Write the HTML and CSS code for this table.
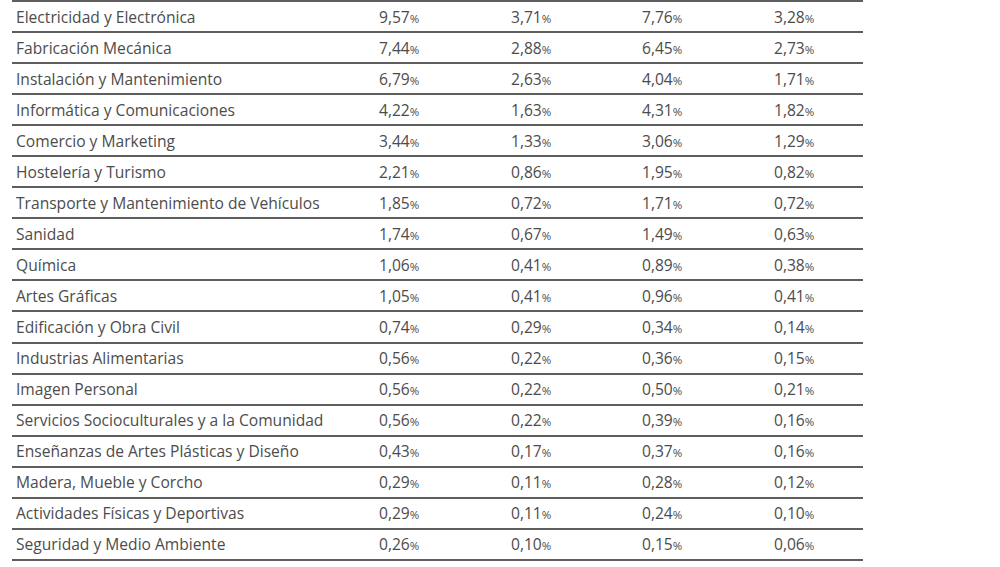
FILE: index.html
```html
<!DOCTYPE html>
<html lang="es">
<head>
<meta charset="utf-8">
<link rel="stylesheet" href="styles.css">
</head>
<body>
<div class="table">
  <div class="row"><div class="name">Electricidad y Electrónica</div><div class="num">9,57<span class="pc">%</span></div><div class="num">3,71<span class="pc">%</span></div><div class="num">7,76<span class="pc">%</span></div><div class="num">3,28<span class="pc">%</span></div></div>
  <div class="row"><div class="name">Fabricación Mecánica</div><div class="num">7,44<span class="pc">%</span></div><div class="num">2,88<span class="pc">%</span></div><div class="num">6,45<span class="pc">%</span></div><div class="num">2,73<span class="pc">%</span></div></div>
  <div class="row"><div class="name">Instalación y Mantenimiento</div><div class="num">6,79<span class="pc">%</span></div><div class="num">2,63<span class="pc">%</span></div><div class="num">4,04<span class="pc">%</span></div><div class="num">1,71<span class="pc">%</span></div></div>
  <div class="row"><div class="name">Informática y Comunicaciones</div><div class="num">4,22<span class="pc">%</span></div><div class="num">1,63<span class="pc">%</span></div><div class="num">4,31<span class="pc">%</span></div><div class="num">1,82<span class="pc">%</span></div></div>
  <div class="row"><div class="name">Comercio y Marketing</div><div class="num">3,44<span class="pc">%</span></div><div class="num">1,33<span class="pc">%</span></div><div class="num">3,06<span class="pc">%</span></div><div class="num">1,29<span class="pc">%</span></div></div>
  <div class="row"><div class="name">Hostelería y Turismo</div><div class="num">2,21<span class="pc">%</span></div><div class="num">0,86<span class="pc">%</span></div><div class="num">1,95<span class="pc">%</span></div><div class="num">0,82<span class="pc">%</span></div></div>
  <div class="row"><div class="name">Transporte y Mantenimiento de Vehículos</div><div class="num">1,85<span class="pc">%</span></div><div class="num">0,72<span class="pc">%</span></div><div class="num">1,71<span class="pc">%</span></div><div class="num">0,72<span class="pc">%</span></div></div>
  <div class="row"><div class="name">Sanidad</div><div class="num">1,74<span class="pc">%</span></div><div class="num">0,67<span class="pc">%</span></div><div class="num">1,49<span class="pc">%</span></div><div class="num">0,63<span class="pc">%</span></div></div>
  <div class="row"><div class="name">Química</div><div class="num">1,06<span class="pc">%</span></div><div class="num">0,41<span class="pc">%</span></div><div class="num">0,89<span class="pc">%</span></div><div class="num">0,38<span class="pc">%</span></div></div>
  <div class="row"><div class="name">Artes Gráficas</div><div class="num">1,05<span class="pc">%</span></div><div class="num">0,41<span class="pc">%</span></div><div class="num">0,96<span class="pc">%</span></div><div class="num">0,41<span class="pc">%</span></div></div>
  <div class="row"><div class="name">Edificación y Obra Civil</div><div class="num">0,74<span class="pc">%</span></div><div class="num">0,29<span class="pc">%</span></div><div class="num">0,34<span class="pc">%</span></div><div class="num">0,14<span class="pc">%</span></div></div>
  <div class="row"><div class="name">Industrias Alimentarias</div><div class="num">0,56<span class="pc">%</span></div><div class="num">0,22<span class="pc">%</span></div><div class="num">0,36<span class="pc">%</span></div><div class="num">0,15<span class="pc">%</span></div></div>
  <div class="row"><div class="name">Imagen Personal</div><div class="num">0,56<span class="pc">%</span></div><div class="num">0,22<span class="pc">%</span></div><div class="num">0,50<span class="pc">%</span></div><div class="num">0,21<span class="pc">%</span></div></div>
  <div class="row"><div class="name">Servicios Socioculturales y a la Comunidad</div><div class="num">0,56<span class="pc">%</span></div><div class="num">0,22<span class="pc">%</span></div><div class="num">0,39<span class="pc">%</span></div><div class="num">0,16<span class="pc">%</span></div></div>
  <div class="row"><div class="name">Enseñanzas de Artes Plásticas y Diseño</div><div class="num">0,43<span class="pc">%</span></div><div class="num">0,17<span class="pc">%</span></div><div class="num">0,37<span class="pc">%</span></div><div class="num">0,16<span class="pc">%</span></div></div>
  <div class="row"><div class="name">Madera, Mueble y Corcho</div><div class="num">0,29<span class="pc">%</span></div><div class="num">0,11<span class="pc">%</span></div><div class="num">0,28<span class="pc">%</span></div><div class="num">0,12<span class="pc">%</span></div></div>
  <div class="row"><div class="name">Actividades Físicas y Deportivas</div><div class="num">0,29<span class="pc">%</span></div><div class="num">0,11<span class="pc">%</span></div><div class="num">0,24<span class="pc">%</span></div><div class="num">0,10<span class="pc">%</span></div></div>
  <div class="row"><div class="name">Seguridad y Medio Ambiente</div><div class="num">0,26<span class="pc">%</span></div><div class="num">0,10<span class="pc">%</span></div><div class="num">0,15<span class="pc">%</span></div><div class="num">0,06<span class="pc">%</span></div></div>
</div>
</body>
</html>
```
FILE: styles.css
```css
html, body {
  margin: 0;
  padding: 0;
  background: #ffffff;
}
body {
  font-family: "Open Sans", "Noto Sans", sans-serif;
  color: #4c4c4c;
}
.table {
  margin-left: 12px;
  width: 851px;
  border-top: 2px solid #5e5e5e;
}
.row {
  display: grid;
  grid-template-columns: 353px 132px 131px 132px 103px;
  height: 29.06px;
  align-items: center;
  border-bottom: 2px solid #5e5e5e;
  font-size: 15.6px;
}
.name {
  padding-left: 4px;
  white-space: nowrap;
}
.num {
  padding-left: 14px;
}
.pc {
  font-size: 11.5px;
}
```
